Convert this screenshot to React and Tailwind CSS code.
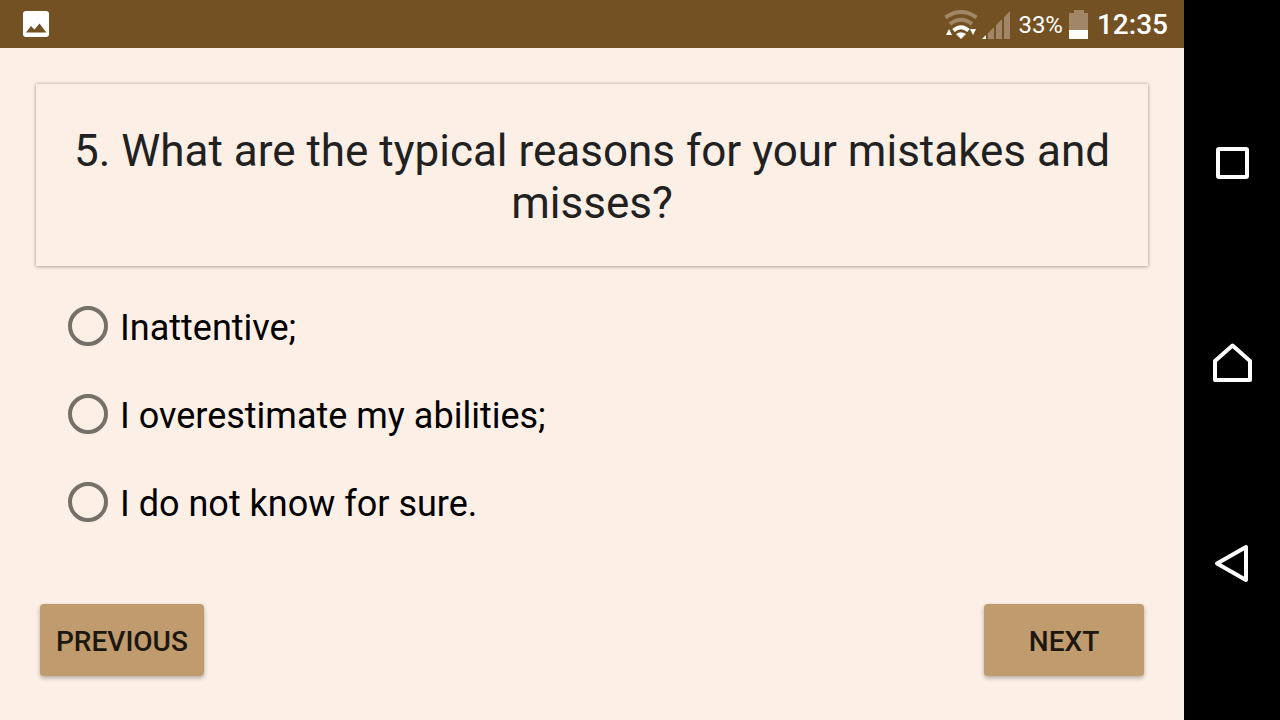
import React, { useState } from "react";

const options = [
  "Inattentive;",
  "I overestimate my abilities;",
  "I do not know for sure.",
];

const PictureIcon = () => (
  <svg width="26" height="26" viewBox="0 0 26 26" aria-hidden="true">
    <rect width="26" height="26" rx="3" fill="#fff" />
    <path
      d="M3 21.5L8 15L11.5 18.5L16.5 12.5L23.3 21.5Z"
      fill="#735122"
    />
  </svg>
);

const WifiIcon = () => (
  <svg width="34" height="30" viewBox="0 0 34 30" aria-hidden="true">
    <g fill="none" strokeWidth="4">
      <path d="M1.5 7.5Q17 -3.5 32.5 7.5" stroke="#a18767" />
      <path d="M6 14Q17 5.5 28 14" stroke="#a18767" />
      <path d="M9.5 20.5Q17 14 24.5 20.5" stroke="#fff" />
    </g>
    <path d="M12 24Q17 20.5 22 24L17 29Z" fill="#fff" />
    <path d="M2 25L5 19L8 25Z" fill="#fff" />
    <path d="M26 19H32L29 25Z" fill="#fff" />
  </svg>
);

const SignalIcon = () => (
  <svg width="28" height="28" viewBox="0 0 28 28" aria-hidden="true">
    <path d="M0 28L4 24V28Z" fill="#fff" />
    <path
      d="M6 28V22L12 16V28ZM14 28V14L20 8V28ZM22 28V6L28 0V28Z"
      fill="#a18767"
    />
  </svg>
);

const BatteryIcon = () => (
  <svg width="20" height="30" viewBox="0 0 20 30" aria-hidden="true">
    <path d="M0 3H5V0H15V3H19V20H0Z" fill="#a18767" />
    <path d="M0 20H19V29H0Z" fill="#fff" />
  </svg>
);

const StatusBar = () => (
  <header className="flex h-12 items-center bg-[#735122] pl-[23px] pr-4 text-white">
    <PictureIcon />
    <div className="ml-auto flex items-center pt-0.5">
      <WifiIcon />
      <div className="ml-1">
        <SignalIcon />
      </div>
      <span className="ml-2 text-2xl">33%</span>
      <div className="ml-1.5">
        <BatteryIcon />
      </div>
      <span className="ml-2 text-[28px] font-medium">12:35</span>
    </div>
  </header>
);

const NavBar = () => (
  <nav className="flex w-24 shrink-0 flex-col items-center justify-around bg-black pt-[63px] pb-[57px]">
    <button type="button" aria-label="Recent apps">
      <svg width="40" height="40" viewBox="0 0 40 40" fill="none">
        <rect
          x="6"
          y="6"
          width="29"
          height="28"
          rx="1"
          stroke="#fff"
          strokeWidth="4"
        />
      </svg>
    </button>
    <button type="button" aria-label="Home">
      <svg width="40" height="40" viewBox="0 0 40 40" fill="none">
        <path
          d="M3 37V18L20.5 2.5L38 18V37Z"
          stroke="#fff"
          strokeWidth="4"
          strokeLinejoin="round"
        />
      </svg>
    </button>
    <button type="button" aria-label="Back">
      <svg width="40" height="40" viewBox="0 0 40 40" fill="none">
        <path
          d="M5 20.5L34 4V37Z"
          stroke="#fff"
          strokeWidth="4"
          strokeLinejoin="round"
        />
      </svg>
    </button>
  </nav>
);

const App = () => {
  const [answer, setAnswer] = useState("");

  return (
    <div className="flex min-h-screen bg-[#fcefe6] font-['Roboto',sans-serif]">
      <div className="flex flex-1 flex-col">
        <StatusBar />
        <main className="flex flex-1 flex-col px-9 pt-9 pb-11">
          <form
            className="flex flex-1 flex-col"
            onSubmit={(e) => e.preventDefault()}
          >
            <h1 className="px-8 pt-[41px] pb-[37px] text-center text-[44px] leading-[52px] text-[#212121] shadow-[0_0_3px_rgba(0,0,0,0.25),0_1px_4px_rgba(0,0,0,0.2)]">
              5. What are the typical reasons for your mistakes and misses?
            </h1>
            <div className="mt-4 flex flex-col px-8">
              {options.map((option) => (
                <label
                  key={option}
                  className="flex h-[88px] items-center gap-3 text-4xl text-black"
                >
                  <input
                    type="radio"
                    name="answer"
                    value={option}
                    checked={answer === option}
                    onChange={() => setAnswer(option)}
                    className="size-10 shrink-0 appearance-none rounded-full border-4 border-[#757068] checked:bg-[#757068] checked:bg-clip-content checked:p-1.5"
                  />
                  <span className="pt-1">{option}</span>
                </label>
              ))}
            </div>
            <div className="mt-auto flex justify-between px-1">
              <button
                type="button"
                className="h-[72px] rounded-sm bg-[#c09b6d] px-4 pt-1 text-[28px] font-medium text-[#1c1710] shadow-[0_2px_4px_rgba(0,0,0,0.3)]"
              >
                PREVIOUS
              </button>
              <button
                type="submit"
                className="h-[72px] w-40 rounded-sm bg-[#c09b6d] px-4 pt-1 text-[28px] font-medium text-[#1c1710] shadow-[0_2px_4px_rgba(0,0,0,0.3)]"
              >
                NEXT
              </button>
            </div>
          </form>
        </main>
      </div>
      <NavBar />
    </div>
  );
};

export default App;
